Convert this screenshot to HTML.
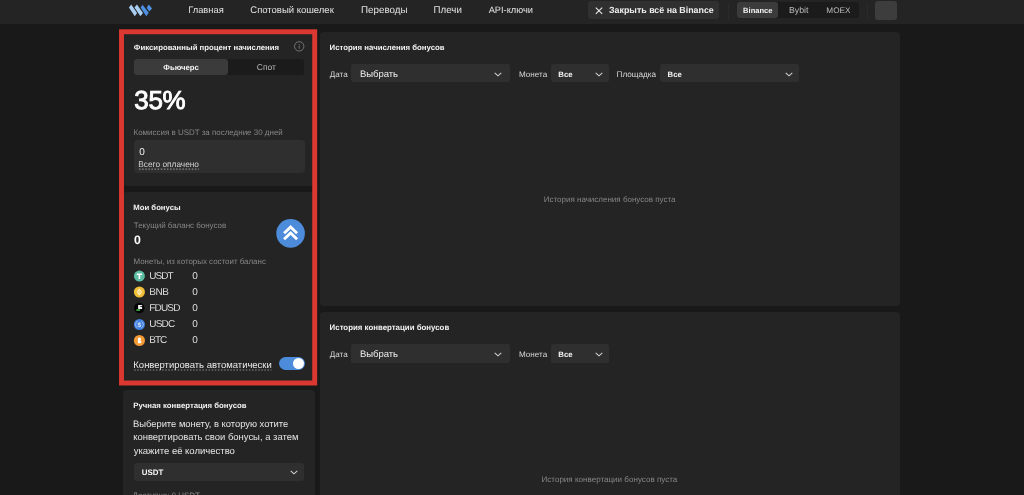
<!DOCTYPE html>
<html lang="ru">
<head>
<meta charset="utf-8">
<title>Бонусы</title>
<style>
*{box-sizing:border-box;margin:0;padding:0}
html,body{width:1024px;height:495px;overflow:hidden;background:#191919}
body{position:relative;will-change:transform;text-rendering:geometricPrecision;font-family:"Liberation Sans",sans-serif;color:#eee;font-size:9px}
.abs{position:absolute}
.tx{position:absolute;white-space:nowrap;line-height:0;height:20px}
.tx i{display:inline-block;width:0;height:20px}
#hdr{position:absolute;left:0;top:0;width:1024px;height:23.5px;background:#242424}
.panel{position:absolute;background:#242424;border-radius:4px}
.sel{position:absolute;background:#2f2f2f;border-radius:2.5px;height:18.25px}
.chev{position:absolute;width:8px;height:5px}
.dot{position:absolute;height:1.1px;background:repeating-linear-gradient(90deg,#8a8a8a 0,#8a8a8a 1.5px,transparent 1.5px,transparent 3.1px)}
</style>
</head>
<body>
<div id="hdr"></div>
<svg class="abs" style="left:128px;top:4px" width="25" height="13" viewBox="0 0 25 13">
  <polygon points="3.25,0.45 0.9,3.5 6.8,12.2 9.1,9.1" fill="#a8cef2"/>
  <polygon points="8.9,0.45 6.5,3.5 12.4,12.2 15,9.1" fill="#a8cef2"/>
  <polygon points="14.5,0.7 12.6,3.5 18.25,12.2 20.8,8.7" fill="#4d8fe0"/>
  <polygon points="20.8,0.45 18.7,3.7 21.3,7.5 24.1,4.4" fill="#4d8fe0"/>
</svg>

<div class="abs" style="left:588px;top:0.5px;width:131.25px;height:18.25px;background:#303030;border-radius:3px"></div>
<svg class="abs" style="left:595px;top:7px" width="8" height="8" viewBox="0 0 8 8"><path d="M0.8 0.7 L7.2 6.9 M7.2 0.7 L0.8 6.9" stroke="#ededed" stroke-width="1.05" fill="none"/></svg>

<div class="abs" style="left:727.5px;top:3px;width:1px;height:16px;background:#2b2b2b"></div>
<div class="abs" style="left:736.5px;top:2px;width:122.5px;height:16px;background:#1b1b1b;border-radius:3px"></div>
<div class="abs" style="left:736.5px;top:2px;width:41.5px;height:16px;background:#3b3b3b;border-radius:3px"></div>
<div class="abs" style="left:867px;top:3px;width:1px;height:16px;background:#2b2b2b"></div>
<div class="abs" style="left:875px;top:0.75px;width:22px;height:18.75px;background:#3d3d3d;border-radius:3px"></div>

<!-- LEFT PANEL 1 -->
<div class="panel" style="left:123px;top:32px;width:192px;height:154px"></div>
<svg class="abs" style="left:293px;top:40px" width="13" height="13" viewBox="0 0 13 13"><circle cx="6.2" cy="6.35" r="4.7" fill="none" stroke="#7c7c7c" stroke-width="0.9"/><rect x="5.75" y="5.6" width="0.9" height="3" fill="#7c7c7c"/><rect x="5.75" y="4.2" width="0.9" height="0.85" fill="#7c7c7c"/></svg>
<div class="abs" style="left:134px;top:58.75px;width:170.25px;height:15.75px;background:#1b1b1b;border-radius:3px"></div>
<div class="abs" style="left:134px;top:58.75px;width:94px;height:15.75px;background:#3b3b3b;border-radius:3px"></div>
<div class="abs" style="left:134px;top:139.5px;width:170.5px;height:33.75px;background:#2f2f2f;border-radius:4px"></div>
<svg class="abs" style="left:138px;top:167px" width="64" height="4"><line x1="1" y1="2.1" x2="60.8" y2="2.1" stroke="#8c8c8c" stroke-width="1.1" stroke-dasharray="1.55 1.55"/></svg>

<!-- LEFT PANEL 2 -->
<div class="panel" style="left:123px;top:192.4px;width:192px;height:192px"></div>
<svg class="abs" style="left:276px;top:219px" width="30" height="30" viewBox="0 0 30 30"><circle cx="14.6" cy="14.4" r="14.3" fill="#4d8bdb"/><path d="M8.1 14.2 L14.6 8 L21.1 14.2 M8.1 20.2 L14.6 14 L21.1 20.2" fill="none" stroke="#fff" stroke-width="2.85" stroke-linejoin="miter"/></svg>

<!-- coins -->
<svg class="abs" style="left:133px;top:269px" width="13" height="80" viewBox="0 0 13 80">
  <!-- USDT -->
  <circle cx="6.4" cy="7.1" r="5.5" fill="#5dbda3"/>
  <path d="M3.8 4.6 H9 V6 H7.2 V9.9 H5.6 V6 H3.8 Z" fill="#fff"/>
  <!-- BNB -->
  <circle cx="6.4" cy="23" r="5.55" fill="#f0bf38"/>
  <path d="M6.4 19.6 L9.6 23 L6.4 26.4 L3.2 23 Z" fill="#f9e3a0" opacity="0.75"/>
  <path d="M4.7 22 L6.4 20.3 L8.1 22 M4.7 24 L6.4 25.7 L8.1 24" fill="none" stroke="#fff" stroke-width="0.8" opacity="0.9"/>
  <!-- FDUSD -->
  <circle cx="6.3" cy="39" r="5.2" fill="#030303"/>
  <path d="M5.1 36 H9.1 V37.3 H7.3 V38 H9.1 V40 H5.1 Z" fill="#f2f2f2"/>
  <rect x="3.2" y="40.3" width="4" height="1.5" rx="0.6" fill="#4cc152"/>
  <!-- USDC -->
  <circle cx="6.4" cy="55.5" r="5.55" fill="#3f7fe0"/>
  <path d="M4.6 52 A4 4 0 0 0 4.6 59 M8.2 52 A4 4 0 0 1 8.2 59" fill="none" stroke="#a9c8f3" stroke-width="0.9"/>
  <text x="6.4" y="57.9" font-size="6.5" font-weight="bold" fill="#dce9fb" text-anchor="middle" font-family="Liberation Sans, sans-serif">$</text>
  <!-- BTC -->
  <circle cx="6.4" cy="71.5" r="5.55" fill="#f39a35"/>
  <path d="M4.9 68.8 H7 C8.4 68.8 8.4 71.2 7.2 71.4 C8.9 71.6 8.8 74.3 7 74.3 H4.9 Z" fill="#fff"/>
</svg>

<svg class="abs" style="left:133px;top:368px" width="142" height="4"><line x1="1.2" y1="2" x2="138.4" y2="2" stroke="#8c8c8c" stroke-width="1.1" stroke-dasharray="1.55 1.55"/></svg>
<div class="abs" style="left:278.8px;top:357px;width:25.8px;height:13.4px;border-radius:7px;background:#4d8bdb"></div>
<div class="abs" style="left:292.7px;top:358px;width:11px;height:11px;border-radius:50%;background:#fff"></div>

<!-- LEFT PANEL 3 -->
<div class="panel" style="left:122.8px;top:389.6px;width:192.4px;height:120px"></div>
<div class="sel" style="left:134.2px;top:462.6px;width:170px"></div>
<svg class="chev" style="left:289.5px;top:469.7px" viewBox="0 0 8 5"><path d="M0.7 0.9 L4 3.9 L7.3 0.9" fill="none" stroke="#d2d2d2" stroke-width="1.05"/></svg>

<!-- RIGHT PANEL 1 -->
<div class="panel" style="left:320px;top:32px;width:579.6px;height:274.4px"></div>
<div class="sel" style="left:351px;top:64.1px;width:159px"></div>
<svg class="chev" style="left:493.8px;top:71.6px" viewBox="0 0 8 5"><path d="M0.7 0.9 L4 3.9 L7.3 0.9" fill="none" stroke="#d2d2d2" stroke-width="1.05"/></svg>
<div class="sel" style="left:551px;top:64.1px;width:57.8px"></div>
<svg class="chev" style="left:594.8px;top:71.6px" viewBox="0 0 8 5"><path d="M0.7 0.9 L4 3.9 L7.3 0.9" fill="none" stroke="#d2d2d2" stroke-width="1.05"/></svg>
<div class="sel" style="left:660px;top:64.1px;width:138.6px"></div>
<svg class="chev" style="left:784.5px;top:71.6px" viewBox="0 0 8 5"><path d="M0.7 0.9 L4 3.9 L7.3 0.9" fill="none" stroke="#d2d2d2" stroke-width="1.05"/></svg>

<!-- RIGHT PANEL 2 -->
<div class="panel" style="left:320px;top:312.4px;width:579.6px;height:200px"></div>
<div class="sel" style="left:351px;top:344.4px;width:159px"></div>
<svg class="chev" style="left:493.8px;top:351.9px" viewBox="0 0 8 5"><path d="M0.7 0.9 L4 3.9 L7.3 0.9" fill="none" stroke="#d2d2d2" stroke-width="1.05"/></svg>
<div class="sel" style="left:551px;top:344.4px;width:57.8px"></div>
<svg class="chev" style="left:594.8px;top:351.9px" viewBox="0 0 8 5"><path d="M0.7 0.9 L4 3.9 L7.3 0.9" fill="none" stroke="#d2d2d2" stroke-width="1.05"/></svg>

<div class="tx" id="n1" style="left:188.20px;top:-7.40px;font-size:9.34px;color:#e2e2e2;"><i></i>Главная</div>
<div class="tx" id="n2" style="left:250.27px;top:-7.40px;font-size:9.51px;color:#e2e2e2;"><i></i>Спотовый кошелек</div>
<div class="tx" id="n3" style="left:360.93px;top:-7.40px;font-size:9.84px;color:#e2e2e2;"><i></i>Переводы</div>
<div class="tx" id="n4" style="left:433.58px;top:-7.40px;font-size:9.73px;color:#e2e2e2;"><i></i>Плечи</div>
<div class="tx" id="n5" style="left:488.69px;top:-7.40px;font-size:9.26px;color:#e2e2e2;"><i></i>API-ключи</div>
<div class="tx" id="cb" style="left:609.08px;top:-7.10px;font-size:8.86px;color:#f0f0f0;font-weight:bold;"><i></i>Закрыть всё на Binance</div>
<div class="tx" id="tb1" style="left:743.10px;top:-6.90px;font-size:7.56px;color:#f4f4f4;font-weight:bold;"><i></i>Binance</div>
<div class="tx" id="tb2" style="left:788.92px;top:-6.90px;font-size:8.77px;color:#bcbcbc;"><i></i>Bybit</div>
<div class="tx" id="tb3" style="left:826.35px;top:-6.90px;font-size:8.19px;color:#bcbcbc;"><i></i>MOEX</div>
<div class="tx" id="t1" style="left:133.86px;top:29.90px;font-size:7.78px;color:#f2f2f2;font-weight:bold;"><i></i>Фиксированный процент начисления</div>
<div class="tx" id="sg1" style="left:163.32px;top:49.80px;font-size:7.76px;color:#f2f2f2;font-weight:bold;"><i></i>Фьючерс</div>
<div class="tx" id="sg2" style="left:256.78px;top:49.80px;font-size:8.49px;color:#b8b8b8;"><i></i>Спот</div>
<div class="tx" id="pct" style="left:134.16px;top:89.20px;font-size:26.00px;color:#fff;letter-spacing:-0.239px;-webkit-text-stroke:0.9px #fff;"><i></i>35%</div>
<div class="tx" id="com" style="left:133.52px;top:114.60px;font-size:7.97px;color:#878787;"><i></i>Комиссия в USDT за последние 30 дней</div>
<div class="tx" id="z1" style="left:139.20px;top:135.10px;font-size:10.00px;color:#f0f0f0;"><i></i>0</div>
<div class="tx" id="paid" style="left:138.31px;top:146.70px;font-size:8.32px;color:#d2d2d2;"><i></i>Всего оплачено</div>
<div class="tx" id="t2" style="left:133.24px;top:189.80px;font-size:7.76px;color:#f2f2f2;font-weight:bold;"><i></i>Мои бонусы</div>
<div class="tx" id="cur" style="left:133.77px;top:207.80px;font-size:7.96px;color:#878787;"><i></i>Текущий баланс бонусов</div>
<div class="tx" id="z2" style="left:133.92px;top:223.60px;font-size:12.30px;color:#fff;font-weight:bold;"><i></i>0</div>
<div class="tx" id="cl" style="left:133.52px;top:243.90px;font-size:7.93px;color:#878787;"><i></i>Монеты, из которых состоит баланс</div>
<div class="tx" id="c0" style="left:149.36px;top:259.20px;font-size:10.00px;color:#dedede;letter-spacing:-0.985px;"><i></i>USDT</div>
<div class="tx" id="v0" style="left:192.25px;top:259.20px;font-size:10.00px;color:#dedede;"><i></i>0</div>
<div class="tx" id="c1" style="left:149.29px;top:275.22px;font-size:10.00px;color:#dedede;letter-spacing:-0.469px;"><i></i>BNB</div>
<div class="tx" id="v1" style="left:192.25px;top:275.22px;font-size:10.00px;color:#dedede;"><i></i>0</div>
<div class="tx" id="c2" style="left:149.29px;top:291.24px;font-size:10.00px;color:#dedede;letter-spacing:-0.842px;"><i></i>FDUSD</div>
<div class="tx" id="v2" style="left:192.25px;top:291.24px;font-size:10.00px;color:#dedede;"><i></i>0</div>
<div class="tx" id="c3" style="left:149.36px;top:307.26px;font-size:10.00px;color:#dedede;letter-spacing:-0.832px;"><i></i>USDC</div>
<div class="tx" id="v3" style="left:192.25px;top:307.26px;font-size:10.00px;color:#dedede;"><i></i>0</div>
<div class="tx" id="c4" style="left:149.29px;top:323.28px;font-size:10.00px;color:#dedede;letter-spacing:-1.075px;"><i></i>BTC</div>
<div class="tx" id="v4" style="left:192.25px;top:323.28px;font-size:10.00px;color:#dedede;"><i></i>0</div>
<div class="tx" id="auto" style="left:133.35px;top:347.50px;font-size:9.47px;color:#ececec;"><i></i>Конвертировать автоматически</div>
<div class="tx" id="t3" style="left:133.24px;top:387.90px;font-size:7.79px;color:#f2f2f2;font-weight:bold;"><i></i>Ручная конвертация бонусов</div>
<div class="tx" id="p1" style="left:132.96px;top:407.00px;font-size:9.39px;color:#e4e4e4;"><i></i>Выберите монету, в которую хотите</div>
<div class="tx" id="p2" style="left:133.16px;top:420.40px;font-size:9.46px;color:#e4e4e4;"><i></i>конвертировать свои бонусы, а затем</div>
<div class="tx" id="p3" style="left:133.68px;top:433.70px;font-size:9.51px;color:#e4e4e4;"><i></i>укажите её количество</div>
<div class="tx" id="su" style="left:141.86px;top:455.00px;font-size:7.93px;color:#f2f2f2;font-weight:bold;"><i></i>USDT</div>
<div class="tx" id="av" style="left:132.62px;top:478.00px;font-size:7.93px;color:#878787;"><i></i>Доступно: 0 USDT</div>
<div class="tx" id="r1" style="left:329.62px;top:29.90px;font-size:7.81px;color:#f2f2f2;font-weight:bold;"><i></i>История начисления бонусов</div>
<div class="tx" id="l1" style="left:329.81px;top:56.60px;font-size:8.12px;color:#d8d8d8;"><i></i>Дата</div>
<div class="tx" id="s1" style="left:359.92px;top:56.50px;font-size:9.48px;color:#f0f0f0;"><i></i>Выбрать</div>
<div class="tx" id="l2" style="left:519.04px;top:56.60px;font-size:8.10px;color:#d8d8d8;"><i></i>Монета</div>
<div class="tx" id="s2" style="left:558.34px;top:56.60px;font-size:7.80px;color:#f2f2f2;font-weight:bold;"><i></i>Все</div>
<div class="tx" id="l3" style="left:616.54px;top:56.60px;font-size:8.18px;color:#d8d8d8;"><i></i>Площадка</div>
<div class="tx" id="s3" style="left:667.62px;top:56.60px;font-size:7.72px;color:#f2f2f2;font-weight:bold;"><i></i>Все</div>
<div class="tx" id="e1" style="left:543.78px;top:181.90px;font-size:8.01px;color:#878787;"><i></i>История начисления бонусов пуста</div>
<div class="tx" id="r2" style="left:329.62px;top:310.20px;font-size:7.86px;color:#f2f2f2;font-weight:bold;"><i></i>История конвертации бонусов</div>
<div class="tx" id="l4" style="left:329.81px;top:336.90px;font-size:8.12px;color:#d8d8d8;"><i></i>Дата</div>
<div class="tx" id="s4" style="left:359.92px;top:336.80px;font-size:9.48px;color:#f0f0f0;"><i></i>Выбрать</div>
<div class="tx" id="l5" style="left:519.04px;top:336.90px;font-size:8.10px;color:#d8d8d8;"><i></i>Монета</div>
<div class="tx" id="s5" style="left:558.34px;top:336.90px;font-size:7.80px;color:#f2f2f2;font-weight:bold;"><i></i>Все</div>
<div class="tx" id="e2" style="left:541.52px;top:462.30px;font-size:8.05px;color:#878787;"><i></i>История конвертации бонусов пуста</div>

<svg class="abs" style="left:0;top:0" width="1024" height="495" viewBox="0 0 1024 495"><rect x="121.5" y="31.75" width="193.2" height="351.25" fill="none" stroke="#db3832" stroke-width="4.95"/></svg>
</body>
</html>
